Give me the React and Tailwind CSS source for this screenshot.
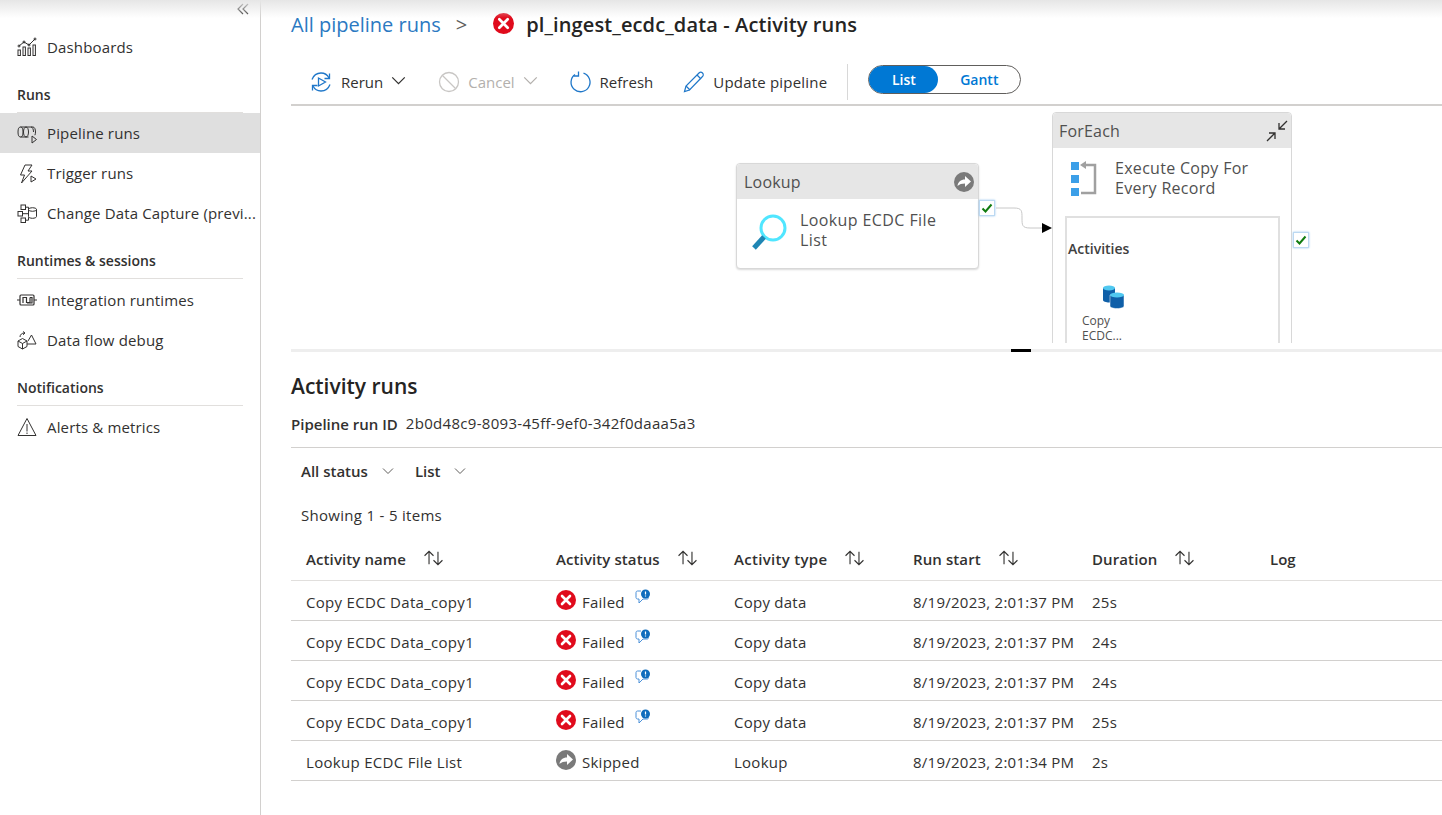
import React from 'react';

const font = { fontFamily: '"Open Sans", "Noto Sans", sans-serif' };

const ICON = 'w-5 h-5 shrink-0 text-[#323130]';

const DashboardsIcon = () => (
  <svg viewBox="0 0 20 20" className={ICON} fill="none" stroke="currentColor" strokeWidth="1">
    <rect x="1" y="13" width="2.4" height="5.5" />
    <rect x="6" y="10" width="2.4" height="8.5" />
    <rect x="11" y="11" width="2.4" height="7.5" />
    <rect x="16" y="8" width="2.4" height="10.5" />
    <path d="M2 9l5-4 5 3 6-6" />
    <circle cx="2" cy="9" r="1" /><circle cx="7" cy="5" r="1" /><circle cx="12" cy="8" r="1" /><circle cx="18" cy="2" r="1" />
  </svg>
);
const PipelineIcon = () => (
  <svg viewBox="0 0 20 20" className={ICON} fill="none" stroke="currentColor" strokeWidth="1">
    <ellipse cx="3.5" cy="8" rx="2.5" ry="5" />
    <path d="M3.5 3h12.5c1.5 0 2.5 2.2 2.5 5 0 1.2-.2 2.3-.6 3.2M3.5 13h8" />
    <path d="M9 3c1.5 0 2.5 2.2 2.5 5s-1 5-2.5 5c-1.5 0-2.5-2.2-2.5-5s1-5 2.5-5z" />
    <path d="M14 3c1.5 0 2.5 2.2 2.5 5" />
    <path d="M15 12v7l4.5-3.5z" />
  </svg>
);
const TriggerIcon = () => (
  <svg viewBox="0 0 20 20" className={ICON} fill="none" stroke="currentColor" strokeWidth="1">
    <path d="M8 1h7l-4 6h4L4.5 19l3-8H3.5z" />
    <path d="M14 12v6l5-3z" />
  </svg>
);
const CaptureIcon = () => (
  <svg viewBox="0 0 20 20" className={ICON} fill="none" stroke="currentColor" strokeWidth="1">
    <rect x="4" y="1" width="4.5" height="4.5" />
    <rect x="1" y="7.5" width="4.5" height="4.5" />
    <rect x="4" y="14" width="4.5" height="4.5" />
    <path d="M5.5 9.7h6M8.5 3.2h3v2M8.5 16.2h3v-3" />
    <ellipse cx="15.5" cy="5.5" rx="4" ry="1.8" />
    <path d="M11.5 5.5v7c0 1 1.8 1.8 4 1.8s4-.8 4-1.8v-7" />
  </svg>
);
const IntegrationIcon = () => (
  <svg viewBox="0 0 20 20" className={ICON} fill="none" stroke="currentColor" strokeWidth="1.2">
    <path d="M0 10h3M17 10h3" />
    <rect x="3" y="5" width="14" height="10" rx="1" />
    <path d="M6 13V7.5h3.5V12.5H13V7.5" />
    <path d="M13 7.5h2V13h-5" />
  </svg>
);
const DebugIcon = () => (
  <svg viewBox="0 0 20 20" className={ICON} fill="none" stroke="currentColor" strokeWidth="1">
    <path d="M1 11l4.5-2.5L10 11v5.5L5.5 19 1 16.5z" />
    <path d="M1 11l4.5 2.5L10 11M5.5 13.5V19" />
    <path d="M10 14h9l-4.5-9-3.5 6" />
    <path d="M3 7c0-2.5 2-4 4.5-4M6 1.5L8 3 6 4.8" />
  </svg>
);
const AlertIcon = () => (
  <svg viewBox="0 0 20 20" className={ICON} fill="none" stroke="currentColor" strokeWidth="1">
    <path d="M10 1.5L19 18.5H1z" />
    <path d="M10 7v7.5M10 15.5v1.5" />
  </svg>
);

const Chevron = ({ className = 'w-3 h-3', color = 'currentColor' }) => (
  <svg viewBox="0 0 12 12" className={className} fill="none" stroke={color} strokeWidth="1">
    <path d="M1 3.5l5 5 5-5" />
  </svg>
);

const FailedIcon = ({ className = 'w-5 h-5' }) => (
  <svg viewBox="0 0 20 20" className={className}>
    <circle cx="10" cy="10" r="10" fill="#e00b1c" />
    <path d="M6 6l8 8M14 6l-8 8" stroke="#fff" strokeWidth="2.6" strokeLinecap="round" />
  </svg>
);

const SkippedIcon = ({ className = 'w-5 h-5' }) => (
  <svg viewBox="0 0 20 20" className={className}>
    <circle cx="10" cy="10" r="10" fill="#7a7a7a" />
    <path d="M3.5 14c.5-4 3.2-6.500 7.500-6.500V4l6 5.500-6 5.500v-3.500c-3 0-5.800.8-7.500 2.500z" fill="#fff" />
  </svg>
);

const MessageIcon = () => (
  <svg viewBox="0 0 16 16" className="w-4 h-4 mb-2">
    <path d="M6 2H2.5C1.7 2 1 2.7 1 3.5v5C1 9.3 1.7 10 2.5 10H4v4l4-4h4c1 0 1.500-.6 1.500-1.500" fill="none" stroke="#4a90d9" strokeWidth="1" />
    <circle cx="10.500" cy="5" r="4.500" fill="#0f6cbd" />
    <path d="M10.500 2.500v3M10.500 6.500v1" stroke="#fff" strokeWidth="1.200" />
  </svg>
);

const SortIcon = () => (
  <svg viewBox="1 1 17 14" className="w-[19px] h-4 text-[#323130]" fill="none" stroke="currentColor" strokeWidth="1">
    <path d="M5.500 13.500V2M1.500 6l4-4 4 4" />
    <path d="M13.500 2.500V14M9.500 10l4 4 4-4" />
  </svg>
);

const RerunIcon = () => (
  <svg viewBox="0 0 24 24" className="w-6 h-6" fill="none" stroke="#1f77c9" strokeWidth="1.300">
    <path d="M3 9.500C4.500 5.500 8 3 12 3c3.500 0 6.500 2 8 5" />
    <path d="M21 14.500c-1.500 4-5 6.500-9 6.500-3.500 0-6.500-2-8-5" />
    <path d="M20.500 3.500V8.500H15.500M3.500 20.500V15.500H8.500" />
    <path d="M9.500 8v8l7-4z" />
  </svg>
);
const CancelIcon = () => (
  <svg viewBox="0 0 22 22" className="w-[22px] h-[22px]" fill="none" stroke="#c8c6c4" strokeWidth="1.300">
    <circle cx="11" cy="11" r="9.500" />
    <path d="M4.500 4.500l13 13" />
  </svg>
);
const RefreshIcon = () => (
  <svg viewBox="0 0 22 22" className="w-[22px] h-[22px]" fill="none" stroke="#1f77c9" strokeWidth="1.300">
    <path d="M13.500 2.200A9.500 9.500 0 1 1 5 3.500" />
    <path d="M8.500 0.500v4.500H3.500" />
  </svg>
);
const PencilIcon = () => (
  <svg viewBox="0 0 22 22" className="w-[22px] h-[22px]" fill="none" stroke="#1f77c9" strokeWidth="1.200">
    <path d="M1.500 20.500l1.500-5.500L16 2c1-1 2.500-1 3.500 0s1 2.500 0 3.500L6.500 19z" />
    <path d="M14 4l4 4M3 15l4 4" />
  </svg>
);

const SideHeading = ({ children, className = '' }) => (
  <div className={`mx-[17px] h-[46px] pb-[7px] border-b border-[#e1dfdd] text-[14px] font-semibold text-[#323130] flex items-end ${className}`}>
    {children}
  </div>
);

const NavItem = ({ icon, label, active, className = '' }) => (
  <div className={`h-10 pl-[17px] flex items-center gap-[10px] text-[15px] tracking-[0.15px] text-[#323130] whitespace-nowrap ${active ? 'bg-[#dfdfdf]' : ''} ${className}`}>
    {icon}
    <span>{label}</span>
  </div>
);

const Sidebar = () => (
  <aside className="w-[261px] shrink-0 border-r border-[#d2d0ce] min-h-[815px]">
    <div className="h-[27px] flex justify-end pr-[11px] pt-[3px]">
      <svg viewBox="0 0 12 12" className="w-3 h-3 text-[#323130]" fill="none" stroke="currentColor" strokeWidth="1.200">
        <path d="M6 1L1 6l5 5M11 1L6 6l5 5" />
      </svg>
    </div>
    <NavItem icon={<DashboardsIcon />} label="Dashboards" />
    <SideHeading>Runs</SideHeading>
    <NavItem active className="pt-[1px]" icon={<PipelineIcon />} label="Pipeline runs" />
    <NavItem className="pt-[1px]" icon={<TriggerIcon />} label="Trigger runs" />
    <NavItem className="pt-[1px]" icon={<CaptureIcon />} label="Change Data Capture (previ..." />
    <SideHeading className="mb-[1px]">Runtimes &amp; sessions</SideHeading>
    <NavItem icon={<IntegrationIcon />} label="Integration runtimes" />
    <NavItem icon={<DebugIcon />} label="Data flow debug" />
    <SideHeading className="mb-[1px]">Notifications</SideHeading>
    <NavItem icon={<AlertIcon />} label="Alerts & metrics" />
  </aside>
);

const ToolButton = ({ icon, label, caret, disabled, className = '' }) => (
  <div className={`flex items-center gap-[8px] text-[15px] ${disabled ? 'text-[#b3b0ad]' : 'text-[#323130]'} ${className}`}>
    {icon}
    <span className="mt-[2px]">{label}</span>
    {caret && <Chevron className="w-[15px] h-[15px] mb-[3px]" color={disabled ? '#b3b0ad' : '#323130'} />}
  </div>
);

const Toolbar = () => (
  <div className="h-[57px] border-b-2 border-[#d2d0ce] pl-[18px] pt-[10px] flex items-center">
    <div className="flex items-center gap-[32px]">
      <ToolButton icon={<RerunIcon />} label="Rerun" caret />
      <ToolButton icon={<CancelIcon />} label="Cancel" caret disabled />
      <ToolButton icon={<RefreshIcon />} label="Refresh" />
      <ToolButton className="-ml-[2px] tracking-[0.2px]" icon={<PencilIcon />} label="Update pipeline" />
    </div>
    <div className="w-px h-[36px] bg-[#d8d8d8] ml-[20px] mr-[20px]" />
    <div className="w-[153px] h-[29px] rounded-full border border-[#605e5c] flex text-[14px] font-semibold -mt-[4px]">
      <div className="w-[69px] rounded-full bg-[#0078d4] text-white flex items-center justify-center">List</div>
      <div className="flex-1 text-[#0078d4] flex items-center justify-center">Gantt</div>
    </div>
  </div>
);

const StatusCheck = ({ className }) => (
  <div className={`absolute w-4 h-4 bg-white border border-[#bcd9f2] shadow-[0_0_2px_#9cc8ee] flex items-center justify-center ${className}`}>
    <svg viewBox="0 0 12 12" className="w-3 h-3" fill="none" stroke="#107c10" strokeWidth="2">
      <path d="M1.500 6.500l3 3 6-7" />
    </svg>
  </div>
);

const NodeHeader = ({ title, children, className = 'pl-[6px]' }) => (
  <div className={`h-[35px] bg-[#e6e6e6] rounded-t-[4px] flex items-center justify-between pr-[3px] text-[16px] tracking-[0.2px] text-[#505050] ${className}`}>
    <span>{title}</span>
    {children}
  </div>
);

const Canvas = () => (
  <div className="relative h-[237px] overflow-hidden">
    <div className="absolute left-[445px] top-[57px] w-[243px] h-[106px] bg-white border border-[#d8d8d8] rounded-[4px] shadow-[0_1px_2px_rgba(0,0,0,0.15)]">
      <NodeHeader title="Lookup" className="pl-[7px]">
        <SkippedIcon className="w-5 h-5 mr-[1px]" />
      </NodeHeader>
      <div className="flex pl-[15px] pt-[11px] gap-[12px] text-[16px] tracking-[0.4px] leading-[20px] text-[#505050]">
        <svg viewBox="0 0 36 38" className="w-9 h-[38px] mt-[3px] shrink-0" fill="none">
          <circle cx="21" cy="15" r="12" stroke="#50e6ff" strokeWidth="3" />
          <path d="M12 24L2 35" stroke="#1f86b4" strokeWidth="5" />
        </svg>
        <span className="w-[160px]">Lookup ECDC File List</span>
      </div>
    </div>
    <StatusCheck className="left-[688px] top-[94px]" />
    <svg className="absolute left-[704px] top-[95px] w-[70px] h-[36px]" viewBox="0 0 70 36" fill="none">
      <path d="M1 7h18c8 0 8 3 8 10s0 10 8 10h12" stroke="#c8c8c8" strokeWidth="1" />
      <path d="M47 22l10 5-10 5z" fill="#000" />
    </svg>
    <div className="absolute left-[761px] top-[6px] w-[240px] h-[300px] bg-white border border-[#d8d8d8] rounded-[4px]">
      <NodeHeader title="ForEach">
        <svg viewBox="0 0 22 22" className="w-[22px] h-[22px]" fill="none" stroke="#323130" strokeWidth="1.300">
          <path d="M21 1l-8 8M13 3v6h6M1 21l8-8M9 19v-6H3" />
        </svg>
      </NodeHeader>
      <div className="flex pl-[18px] pt-[10px] gap-[18px] text-[16px] tracking-[0.3px] leading-[20px] text-[#505050]">
        <svg viewBox="0 0 26 36" className="w-[26px] h-9 mt-[3px] shrink-0">
          <rect x="0" y="1" width="8" height="8" fill="#3c9fe8" />
          <rect x="0" y="14" width="8" height="8" fill="#3c9fe8" />
          <rect x="0" y="27" width="8" height="8" fill="#3c9fe8" />
          <path d="M14 4h10v28H10" fill="none" stroke="#a0a0a0" strokeWidth="2.500" />
          <path d="M15 0l-6 4 6 4z" fill="#a0a0a0" />
        </svg>
        <span className="w-[160px]">Execute Copy For Every Record</span>
      </div>
      <div className="ml-[12px] mr-[11px] mt-[18px] h-[200px] border-2 border-[#e0e0e0] pl-[1px] pt-[20px]">
        <div className="text-[14px] font-semibold text-[#404040]">Activities</div>
        <div className="w-[68px] mt-[26px] ml-[14px] text-[12px] leading-[15px] text-[#505050]">
          <svg viewBox="0 0 22 24" className="w-[22px] h-6 ml-[20px]">
            <path d="M1 3v12c0 1.500 3 2.500 6 2.500s6-1 6-2.500V3z" fill="#0f5fa8" />
            <ellipse cx="7" cy="3" rx="6" ry="2.500" fill="#50c8f0" />
            <path d="M8 10v11c0 1.500 3 2.500 7 2.500s7-1 7-2.500V10z" fill="#0f5fa8" stroke="#fff" strokeWidth=".5" />
            <ellipse cx="15" cy="10" rx="7" ry="2.500" fill="#50c8f0" />
          </svg>
          <div className="mt-[4px]">Copy<br />ECDC...</div>
        </div>
      </div>
    </div>
    <StatusCheck className="left-[1002px] top-[126px]" />
  </div>
);

const Splitter = () => (
  <div className="h-[9px] relative">
    <div className="absolute left-0 right-0 top-[6px] h-[3px] bg-[#eeeeee]" />
    <div className="absolute left-[720px] top-[6px] w-5 h-[3px] bg-black" />
  </div>
);

const RUNS = [
  { name: 'Copy ECDC Data_copy1', status: 'Failed', type: 'Copy data', start: '8/19/2023, 2:01:37 PM', duration: '25s' },
  { name: 'Copy ECDC Data_copy1', status: 'Failed', type: 'Copy data', start: '8/19/2023, 2:01:37 PM', duration: '24s' },
  { name: 'Copy ECDC Data_copy1', status: 'Failed', type: 'Copy data', start: '8/19/2023, 2:01:37 PM', duration: '24s' },
  { name: 'Copy ECDC Data_copy1', status: 'Failed', type: 'Copy data', start: '8/19/2023, 2:01:37 PM', duration: '25s' },
  { name: 'Lookup ECDC File List', status: 'Skipped', type: 'Lookup', start: '8/19/2023, 2:01:34 PM', duration: '2s' },
];

const GRID = 'grid grid-cols-[250px_178px_179px_179px_178px_1fr] pl-[15px] items-center';

const HeaderCell = ({ label, className = 'tracking-[0.1px]' }) => (
  <div className="flex items-center gap-[18px]">
    <span className={className}>{label}</span>
    <span className="-mt-[3px]"><SortIcon /></span>
  </div>
);

const ActivityTable = () => (
  <div className="text-[15px] text-[#323130]">
    <div className={`${GRID} h-[43px] border-b border-[#e1dfdd] font-semibold`}>
      <HeaderCell label="Activity name" />
      <HeaderCell label="Activity status" />
      <HeaderCell label="Activity type" className="tracking-[0.3px]" />
      <HeaderCell label="Run start" />
      <HeaderCell label="Duration" />
      <div>Log</div>
    </div>
    {RUNS.map((run, idx) => (
      <div key={idx} className={`${GRID} h-10 pt-[3px] border-b border-[#d2d0ce] tracking-[0.25px]`}>
        <div className="tracking-[0.3px]">{run.name}</div>
        <div className="flex items-center">
          <span className="-mt-[5px] mr-[6px]">
            {run.status === 'Failed' ? <FailedIcon /> : <SkippedIcon />}
          </span>
          <span>{run.status}</span>
          {run.status === 'Failed' && <span className="ml-[10px] -mt-[2px]"><MessageIcon /></span>}
        </div>
        <div>{run.type}</div>
        <div>{run.start}</div>
        <div>{run.duration}</div>
        <div />
      </div>
    ))}
  </div>
);

const App = () => (
  <div className="relative w-[1442px] h-[815px] overflow-hidden bg-white flex" style={font}>
    <div className="absolute inset-x-0 top-0 h-[18px] bg-gradient-to-b from-[#e6e6e6] to-transparent pointer-events-none" />
    <Sidebar />
    <main className="flex-1 min-w-0 pl-[30px]">
      <div className="h-[49px] flex items-center text-[20px] pt-[1px]">
        <span className="text-[#2b79c2]">All pipeline runs</span>
        <span className="ml-[15px] text-[#605e5c]">&gt;</span>
        <span className="ml-[26px]"><FailedIcon className="w-[21px] h-[21px] mb-[3px]" /></span>
        <span className="ml-[12px] font-semibold tracking-[0.12px] text-[#252423]">pl_ingest_ecdc_data - Activity runs</span>
      </div>
      <Toolbar />
      <Canvas />
      <Splitter />
      <section>
        <h2 className="mt-[20px] h-[30px] flex items-center text-[21px] font-semibold text-[#252423]">Activity runs</h2>
        <div className="h-[46px] border-b border-[#d2d0ce] flex items-center gap-[8px]">
          <span className="text-[15px] font-semibold text-[#323130]">Pipeline run ID</span>
          <span className="text-[15px] tracking-[0.3px] text-[#323130] -mt-[3px]">2b0d48c9-8093-45ff-9ef0-342f0daaa5a3</span>
        </div>
        <div className="h-[47px] pl-[10px] flex items-center text-[15px] font-semibold text-[#323130]">
          <span>All status</span>
          <Chevron className="w-3 h-3 ml-[14px] mb-[2px]" color="#605e5c" />
          <span className="ml-[21px]">List</span>
          <Chevron className="w-3 h-3 ml-[14px] mb-[2px]" color="#605e5c" />
        </div>
        <div className="h-[43px] pl-[10px] pb-[2px] flex items-center text-[15px] tracking-[0.3px] text-[#323130]">Showing 1 - 5 items</div>
        <ActivityTable />
      </section>
    </main>
  </div>
);

export default App;
